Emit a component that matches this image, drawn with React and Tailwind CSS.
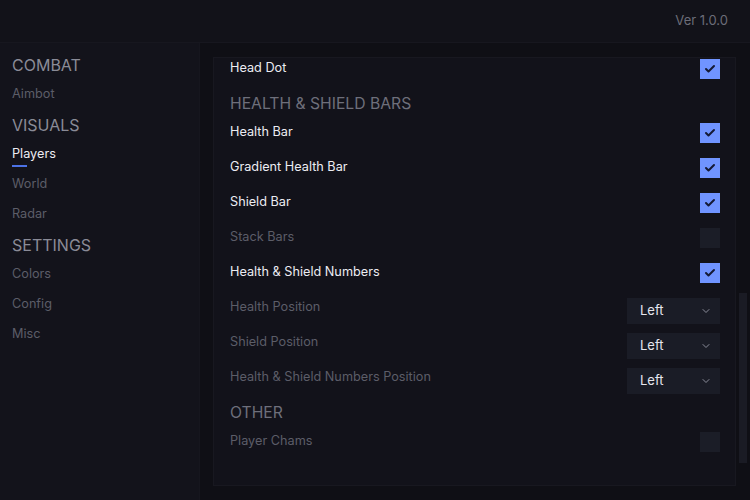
import { ChevronDown, Check } from 'lucide-react';

const sections = [
  { title: 'COMBAT', items: ['Aimbot'] },
  { title: 'VISUALS', items: ['Players', 'World', 'Radar'] },
  { title: 'SETTINGS', items: ['Colors', 'Config', 'Misc'] },
];

function Checkbox({ on }) {
  if (!on) return <div className="w-5 h-5 mt-[3px] bg-[#1b1d27]" />;
  return (
    <div className="w-5 h-5 mt-[3px] bg-[#7094ff] flex items-center justify-center">
      <Check className="w-3 h-3 text-[#151a35]" strokeWidth={4} />
    </div>
  );
}

function Select({ value }) {
  return (
    <div className="w-[93px] h-[26px] mt-[8px] bg-[#1a1c26] flex items-center justify-between pl-[13px] pr-[8px]">
      <span className="text-[13px] text-[#e6e6ee]">{value}</span>
      <ChevronDown className="w-3 h-3 text-[#8a8c99]" strokeWidth={2} />
    </div>
  );
}

function Row({ label, on, enabled, select, className = '' }) {
  return (
    <div className={`h-[35px] flex items-center justify-between ${className}`}>
      <span className={`text-[12.7px] ${enabled ? 'text-[#ececf2]' : 'text-[#5c5d68]'}`}>{label}</span>
      {select ? <Select value={select} /> : <Checkbox on={on} />}
    </div>
  );
}

function Header({ children }) {
  return (
    <div className="h-[29px] pt-[9px] text-[15.7px] leading-[20px] text-[#6e6f7b]">{children}</div>
  );
}

export default function App() {
  return (
    <div
      className="w-[750px] h-[500px] bg-[#0f0f15] flex flex-col overflow-hidden"
      style={{ fontFamily: 'Inter, "Liberation Sans", sans-serif' }}
    >
      <div className="h-[43px] shrink-0 bg-[#121219] border-b border-[#17171f] flex items-center justify-end pr-[22px]">
        <span className="text-[13px] text-[#6c6d78]">Ver 1.0.0</span>
      </div>

      <div className="flex-1 flex min-h-0">
        <aside className="w-[200px] shrink-0 bg-[#13131b] border-r border-[#16161e] pl-[12px] pt-[5px]">
          {sections.map((s) => (
            <div key={s.title}>
              <div className="h-[30px] pt-[7px] text-[16px] leading-[20px] text-[#8a8b97]">{s.title}</div>
              {s.items.map((it) => (
                <div key={it} className="h-[30px] pt-[6px] text-[12.7px] leading-[20px]">
                  <div className={it === 'Players' ? 'text-[#ececf2]' : 'text-[#5c5d68]'}>{it}</div>
                  {it === 'Players' && <div className="w-[15px] h-[2px] bg-[#4c72e6] mt-[1px]" />}
                </div>
              ))}
            </div>
          ))}
        </aside>

        <main className="flex-1 flex pl-[13px] pt-[14px] pb-[14px] min-w-0">
          <div className="flex-1 bg-[#12121a] border border-[#181820] overflow-hidden pl-[16px] pr-[15px]">
            <Row label="Head Dot" on enabled className="-mt-[8px]" />
            <Header>HEALTH &amp; SHIELD BARS</Header>
            <Row label="Health Bar" on enabled />
            <Row label="Gradient Health Bar" on enabled />
            <Row label="Shield Bar" on enabled />
            <Row label="Stack Bars" />
            <Row label="Health & Shield Numbers" on enabled />
            <Row label="Health Position" select="Left" />
            <Row label="Shield Position" select="Left" />
            <Row label="Health & Shield Numbers Position" select="Left" />
            <Header>OTHER</Header>
            <Row label="Player Chams" />
          </div>
          <div className="w-[14px] shrink-0 flex justify-center">
            <div className="w-[8px] h-[170px] mt-[236px] bg-[#1a1b24]" />
          </div>
        </main>
      </div>
    </div>
  );
}
